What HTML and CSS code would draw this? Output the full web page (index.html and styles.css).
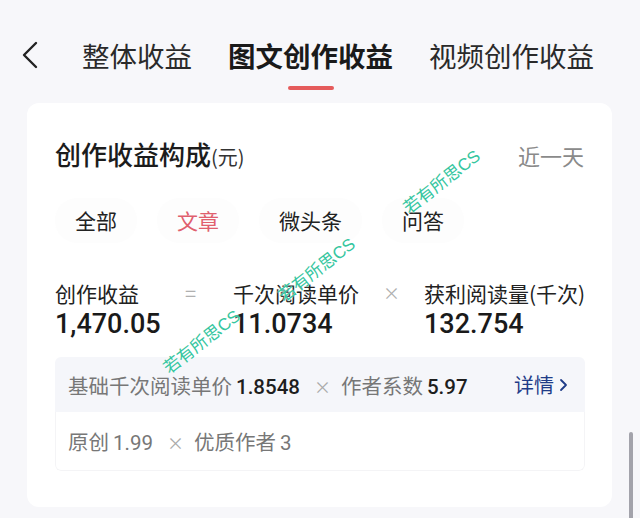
FILE: index.html
```html
<!DOCTYPE html>
<html lang="zh">
<head>
<meta charset="utf-8">
<link rel="stylesheet" href="styles.css">
</head>
<body>
<div class="page">
  <header class="header">
    <div class="back">
      <svg width="18" height="28" viewBox="0 0 18 28"><path d="M15 2 L3 14 L15 26" fill="none" stroke="#222" stroke-width="2.4" stroke-linecap="round" stroke-linejoin="round"/></svg>
    </div>
    <nav class="tabs">
      <div class="tab">整体收益</div>
      <div class="tab active">图文创作收益<span class="bar"></span></div>
      <div class="tab">视频创作收益</div>
    </nav>
  </header>

  <section class="card">
    <div class="card-head">
      <div class="title">创作收益构成<span class="unit">(元)</span></div>
      <div class="range">近一天</div>
    </div>

    <div class="chips">
      <div class="chip">全部</div>
      <div class="chip on">文章</div>
      <div class="chip">微头条</div>
      <div class="chip">问答</div>
    </div>

    <div class="formula">
      <div class="term t1">
        <div class="label">创作收益</div>
        <div class="num">1,470.05</div>
      </div>
      <div class="op op1">=</div>
      <div class="term t2">
        <div class="label">千次阅读单价</div>
        <div class="num">11.0734</div>
      </div>
      <div class="op op2">×</div>
      <div class="term t3">
        <div class="label">获利阅读量(千次)</div>
        <div class="num">132.754</div>
      </div>
    </div>

    <div class="detail">
      <div class="row top">
        <div class="expr">基础千次阅读单价<b>1.8548</b><i>×</i>作者系数<b>5.97</b></div>
        <div class="more">详情<svg width="10" height="14" viewBox="0 0 10 14"><path d="M3 2 L8 7 L3 12" fill="none" stroke="#1f3c88" stroke-width="1.8" stroke-linecap="round" stroke-linejoin="round"/></svg></div>
      </div>
      <div class="row bottom">
        <div class="expr">原创<em>1.99</em><i>×</i>优质作者<em>3</em></div>
      </div>
    </div>
  </section>

  <div class="wm w1">若有所思CS</div>
  <div class="wm w2">若有所思CS</div>
  <div class="wm w3">若有所思CS</div>
  <div class="scroll"></div>
</div>
</body>
</html>
```

FILE: styles.css
```css
html, body {
  margin: 0;
  padding: 0;
}
body {
  background: #f7f7fa;
  font-family: "Noto Sans CJK SC", "Noto Sans", sans-serif;
  color: #222;
  width: 640px;
  height: 518px;
  overflow: hidden;
}
.page {
  position: relative;
  width: 640px;
  height: 518px;
}
.header {
  height: 103px;
  box-sizing: border-box;
  padding-top: 40px;
  display: flex;
  align-items: flex-start;
}
.back {
  width: 18px;
  height: 28px;
  margin: 1px 0 0 21px;
}
.back svg { display: block; }
.tabs {
  display: flex;
  gap: 36px;
  margin-left: 43px;
}
.tab {
  position: relative;
  font-size: 27.5px;
  line-height: 30px;
  color: #2a2a2a;
  display: flex;
  flex-direction: column;
  align-items: center;
  white-space: nowrap;
}
.tab.active {
  font-weight: 700;
  color: #1a1a1a;
}
.bar {
  display: block;
  width: 46px;
  height: 4px;
  border-radius: 2px;
  background: #e55b5b;
  margin-top: 16px;
}
.card {
  margin: 0 28px 0 27px;
  height: 404px;
  box-sizing: border-box;
  background: #fff;
  border-radius: 12px;
  padding: 36px 28px 0 28px;
}
.card-head {
  display: flex;
  justify-content: space-between;
  align-items: center;
  height: 32px;
}
.title {
  font-size: 26px;
  font-weight: 500;
  color: #1c1c1c;
  line-height: 32px;
}
.unit {
  font-size: 20px;
  font-weight: 400;
  color: #333;
}
.range {
  font-size: 22px;
  color: #8a8a8a;
  line-height: 32px;
}
.chips {
  display: flex;
  gap: 20px;
  margin-top: 27px;
}
.chip {
  height: 45px;
  line-height: 45px;
  padding: 0 20px;
  font-size: 21px;
  color: #222;
  background: #fdfdfd;
  border-radius: 22px;
}
.chip.on {
  color: #e0606e;
}
.formula {
  display: flex;
  margin-top: 36px;
  height: 78px;
}
.term {
  white-space: nowrap;
}
.term .label {
  font-size: 21px;
  line-height: 28px;
  color: #222;
}
.term .num {
  font-family: Roboto, "Noto Sans", sans-serif;
  font-size: 27px;
  line-height: 32px;
  font-weight: 500;
  color: #1a1a1a;
  margin-top: 1px;
}
.t1 { width: 130px; flex: none; }
.t2 { width: 150px; flex: none; }
.op {
  flex: none;
  font-size: 20px;
  line-height: 28px;
  color: #b0b0b0;
}
.op1 { width: 48px; }
.op2 { width: 41px; font-size: 17px; }
.detail {
  width: 530px;
  border-radius: 6px;
  overflow: hidden;
}
.row {
  display: flex;
  align-items: center;
  justify-content: space-between;
  padding: 0 17px 0 13px;
  font-size: 20.5px;
  color: #777;
  white-space: nowrap;
}
.row.top {
  height: 55px;
  background: #f5f6fa;
}
.row.bottom {
  height: 58px;
  background: #fff;
  border: 1px solid #f4f4f6;
  border-top: none;
  border-radius: 0 0 6px 6px;
  padding-left: 12px;
}
.expr b {
  font-family: Roboto, "Noto Sans", sans-serif;
  font-weight: 500;
  color: #1e1e1e;
  margin: 0 4px;
}
.expr em {
  font-family: Roboto, "Noto Sans", sans-serif;
  font-style: normal;
  color: #777;
  margin: 0 4px;
}
.expr i {
  font-style: normal;
  color: #aaa;
  font-size: 17px;
  margin: 0 10px;
}
.more {
  display: flex;
  align-items: center;
  gap: 4px;
  font-size: 20px;
  color: #1f3c88;
}
.wm {
  position: absolute;
  font-family: "Liberation Sans", "Noto Sans CJK SC", sans-serif;
  font-size: 17px;
  color: #36c6a0;
  transform: rotate(-38deg);
  transform-origin: center;
  white-space: nowrap;
  text-shadow: 0 0 2px #fff;
}
.w1 { left: 395px; top: 168px; }
.w2 { left: 270px; top: 256px; }
.w3 { left: 155px; top: 328px; }
.scroll {
  position: absolute;
  left: 629px;
  top: 432px;
  width: 4px;
  height: 100px;
  border-radius: 2px;
  background: #a3a3ab;
}
```
